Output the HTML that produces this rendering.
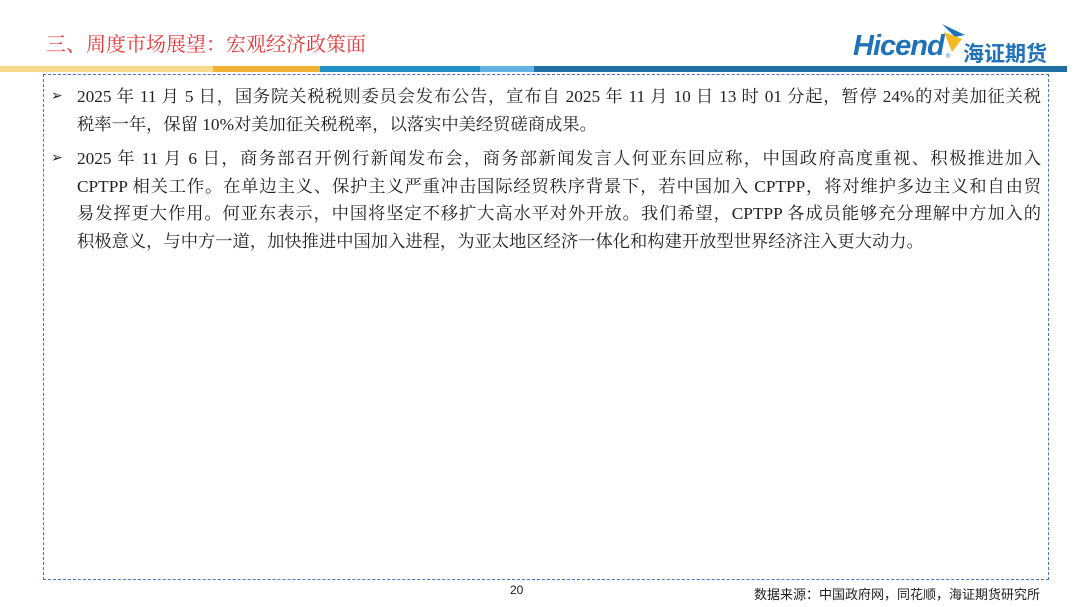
<!DOCTYPE html>
<html><head><meta charset="utf-8"><style>
body{margin:0;width:1080px;height:607px;background:#fff;position:relative;overflow:hidden;font-family:"Liberation Serif","Noto Serif CJK SC",serif;}
.title{position:absolute;left:46px;top:28px;font-size:20px;color:#e8383c;font-family:"Liberation Serif","Noto Serif CJK SC",serif;}
.bar{position:absolute;top:66px;height:6px;}
.box{position:absolute;left:43px;top:74px;width:1006px;height:506px;border:1.5px dashed #4a74c0;box-sizing:border-box;}
.p{position:absolute;left:77px;width:964px;font-size:17.3px;color:#222;}
.l{height:27.7px;line-height:27.7px;text-align:justify;text-align-last:justify;white-space:nowrap;}
.l.last{text-align-last:left;}
.b{position:absolute;left:-26px;top:0;font-size:14px;line-height:27.7px;}
.foot{position:absolute;font-family:"Liberation Sans","Noto Sans CJK SC",sans-serif;color:#222;}
</style></head><body>
<div class="title">三、周度市场展望：宏观经济政策面</div>
<div style="position:absolute;left:853px;top:30px;font-family:'Liberation Sans',sans-serif;font-weight:bold;font-style:italic;font-size:29px;color:#1f72b8;letter-spacing:-1px;">Hicend</div>
<div style="position:absolute;left:946px;top:54px;font-size:6px;color:#1f72b8;font-family:'Liberation Sans',sans-serif;">®</div>
<svg style="position:absolute;left:938px;top:22px" width="30" height="34"><polygon points="4,2 27,13 17,15" fill="#1f72b8"/><polygon points="6,10 24,17 14,30" fill="#f5b921"/></svg>
<div style="position:absolute;left:963px;top:38px;font-family:'Noto Sans CJK SC',sans-serif;font-weight:bold;font-size:21px;color:#1f72b8;">海证期货</div>
<div class="bar" style="left:0;width:213px;background:#f7db8a"></div>
<div class="bar" style="left:213px;width:107px;background:#f0b032"></div>
<div class="bar" style="left:320px;width:160px;background:#2490c8"></div>
<div class="bar" style="left:480px;width:54px;background:#62b2e2"></div>
<div class="bar" style="left:534px;width:533px;background:#1f6ea6"></div>
<div class="box"></div>
<div class="p" style="top:83px">
<span class="b">➢</span>
<div class="l">2025 年 11 月 5 日，国务院关税税则委员会发布公告，宣布自 2025 年 11 月 10 日 13 时 01 分起，暂停 24%的对美加征关税</div>
<div class="l last">税率一年，保留 10%对美加征关税税率，以落实中美经贸磋商成果。</div>
</div>
<div class="p" style="top:145px">
<span class="b">➢</span>
<div class="l">2025 年 11 月 6 日，商务部召开例行新闻发布会，商务部新闻发言人何亚东回应称，中国政府高度重视、积极推进加入</div>
<div class="l">CPTPP 相关工作。在单边主义、保护主义严重冲击国际经贸秩序背景下，若中国加入 CPTPP，将对维护多边主义和自由贸</div>
<div class="l">易发挥更大作用。何亚东表示，中国将坚定不移扩大高水平对外开放。我们希望，CPTPP 各成员能够充分理解中方加入的</div>
<div class="l last">积极意义，与中方一道，加快推进中国加入进程，为亚太地区经济一体化和构建开放型世界经济注入更大动力。</div>
</div>
<div class="foot" style="left:510px;top:583px;font-size:12px;">20</div>
<div class="foot" style="left:754px;top:584px;font-size:13px;">数据来源：中国政府网，同花顺，海证期货研究所</div>
</body></html>
